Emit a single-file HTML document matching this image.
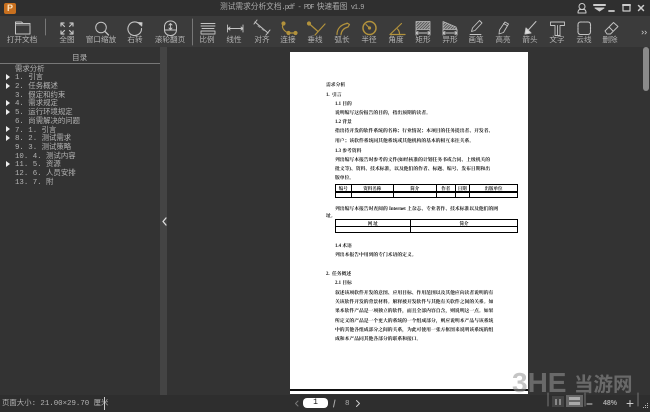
<!DOCTYPE html>
<html lang="zh"><head><meta charset="utf-8"><style>
html,body{margin:0;padding:0}
body{width:650px;height:412px;overflow:hidden;position:relative;background:#333;font-family:"Liberation Sans","Noto Sans CJK SC",sans-serif}
div{position:absolute;white-space:nowrap}
#title{left:0;top:0;width:650px;height:16px;background:#2f2f2f}
#tb{left:0;top:16px;width:650px;height:31px;background:#3b3b3b}
.l{top:35px;font-size:7.6px;line-height:10px;color:#b4b4b4;transform:translateX(-50%)}
.side{font-size:7.4px;line-height:9px;color:#b4b4b4;font-family:"Liberation Mono","Noto Sans CJK SC",monospace}
.arr{left:6px;width:0;height:0;border-left:4px solid #eee;border-top:3px solid transparent;border-bottom:3px solid transparent}
#page{left:290px;top:52px;width:238px;height:337px;background:#fff}
.d{font-family:"Liberation Serif","Noto Serif CJK SC",serif;font-size:4.8px;line-height:6px;color:#111;font-weight:700}
.c{border:.7px solid #000;box-sizing:border-box;font-family:"Liberation Serif","Noto Serif CJK SC",serif;font-size:4.5px;line-height:7px;text-align:center;color:#111;font-weight:700}
svg{position:absolute;left:0;top:0}
.n{letter-spacing:-1px;font-size:7px}
</style></head><body>
<div id="title"></div>
<div id="tb"></div>
<div style="left:4px;top:3px;width:12px;height:11px;background:#c8701f;border-radius:2px;color:#fbe3c0;font-size:9px;line-height:11px;text-align:center;font-weight:700">P</div>
<div style="left:220px;top:3px;font-size:7.7px;line-height:10px;color:#aaa;font-family:'Liberation Mono','Noto Sans CJK SC',monospace">测试需求分析文档<span class="n">.pdf - PDF </span>快速看图<span class="n"> v1.9</span></div>

<div class="l" style="left:22px">打开文档</div>
<div class="l" style="left:67px">全图</div>
<div class="l" style="left:101px">窗口缩放</div>
<div class="l" style="left:135px">右转</div>
<div class="l" style="left:170px">滚轮翻页</div>
<div class="l" style="left:207px">比例</div>
<div class="l" style="left:234px">线性</div>
<div class="l" style="left:262px">对齐</div>
<div class="l" style="left:288px">连接</div>
<div class="l" style="left:315px">垂线</div>
<div class="l" style="left:342px">弧长</div>
<div class="l" style="left:369px">半径</div>
<div class="l" style="left:396px">角度</div>
<div class="l" style="left:423px">矩形</div>
<div class="l" style="left:450px">异形</div>
<div class="l" style="left:476px">画笔</div>
<div class="l" style="left:503px">高亮</div>
<div class="l" style="left:530px">箭头</div>
<div class="l" style="left:557px">文字</div>
<div class="l" style="left:584px">云线</div>
<div class="l" style="left:610px">删除</div>

<!-- sidebar -->
<div style="left:160px;top:47px;width:7px;height:348px;background:#444"></div>
<div style="left:72px;top:53px;font-size:7.6px;line-height:10px;color:#b4b4b4">目录</div>
<div style="left:0;top:63px;width:160px;height:1px;background:#777"></div>
<div class="side" style="left:15px;top:65.5px">需求分析</div>
<div class="side" style="left:15px;top:74px">1.  引言</div>
<div class="side" style="left:15px;top:82.5px">2.  任务概述</div>
<div class="side" style="left:15px;top:91.5px">3.  假定和约束</div>
<div class="side" style="left:15px;top:100px">4.  需求规定</div>
<div class="side" style="left:15px;top:108.5px">5.  运行环境规定</div>
<div class="side" style="left:15px;top:117.5px">6.  尚需解决的问题</div>
<div class="side" style="left:15px;top:126.5px">7.  1.  引言</div>
<div class="side" style="left:15px;top:135px">8.  2.  测试需求</div>
<div class="side" style="left:15px;top:143.5px">9.  3.  测试策略</div>
<div class="side" style="left:15px;top:152.5px">10.  4.  测试内容</div>
<div class="side" style="left:15px;top:161px">11.  5.  资源</div>
<div class="side" style="left:15px;top:169.5px">12.  6.  人员安排</div>
<div class="side" style="left:15px;top:179px">13.  7.  附</div>
<div class="arr" style="top:74px"></div>
<div class="arr" style="top:82.5px"></div>
<div class="arr" style="top:100px"></div>
<div class="arr" style="top:108.5px"></div>
<div class="arr" style="top:126px"></div>
<div class="arr" style="top:135px"></div>
<div class="arr" style="top:161px"></div>

<!-- page -->
<div id="page"></div>
<div style="left:290px;top:389px;width:238px;height:2px;background:#111"></div>
<div style="left:290px;top:391px;width:238px;height:3px;background:#fff"></div>
<div class="d" style="left:326px;top:83px">需求分析</div>
<div class="d" style="left:326px;top:93px">1.&nbsp; 引言</div>
<div class="d" style="left:335px;top:102px">1.1 目的</div>
<div class="d" style="left:335px;top:111px">说明编写这份报告的目的，指出预期的读者。</div>
<div class="d" style="left:335px;top:120px">1.2 背景</div>
<div class="d" style="left:335px;top:129px">指出待开发的软件系统的名称；行业情况；本项目的任务提出者、开发者、</div>
<div class="d" style="left:335px;top:139px">用户；该软件系统同其他系统或其他机构的基本的相互来往关系。</div>
<div class="d" style="left:335px;top:149px">1.3 参考资料</div>
<div class="d" style="left:335px;top:158px">列出编写本报告时参考的文件(如经核准的计划任务书或合同、上级机关的</div>
<div class="d" style="left:335px;top:167px">批文等)、资料、技术标准，以及他们的作者、标题、编号、发布日期和出</div>
<div class="d" style="left:335px;top:176px">版单位。</div>
<div class="c" style="left:335px;top:184px;width:16.5px;height:8px">编号</div>
<div class="c" style="left:351px;top:184px;width:42.5px;height:8px">资料名称</div>
<div class="c" style="left:393px;top:184px;width:43.5px;height:8px">简介</div>
<div class="c" style="left:436px;top:184px;width:19.5px;height:8px">作者</div>
<div class="c" style="left:455px;top:184px;width:14.5px;height:8px">日期</div>
<div class="c" style="left:469px;top:184px;width:49px;height:8px">出版单位</div>
<div class="c" style="left:335px;top:191.5px;width:16.5px;height:6px"></div>
<div class="c" style="left:351px;top:191.5px;width:42.5px;height:6px"></div>
<div class="c" style="left:393px;top:191.5px;width:43.5px;height:6px"></div>
<div class="c" style="left:436px;top:191.5px;width:19.5px;height:6px"></div>
<div class="c" style="left:455px;top:191.5px;width:14.5px;height:6px"></div>
<div class="c" style="left:469px;top:191.5px;width:49px;height:6px"></div>
<div class="d" style="left:335px;top:207px">列出编写本报告时查阅的 Internet 上杂志、专业著作、技术标准以及他们的网</div>
<div class="d" style="left:326px;top:214px">址。</div>
<div class="c" style="left:335px;top:219px;width:75.5px;height:7.5px">网 址</div>
<div class="c" style="left:410px;top:219px;width:108px;height:7.5px">简介</div>
<div class="c" style="left:335px;top:226px;width:75.5px;height:7px"></div>
<div class="c" style="left:410px;top:226px;width:108px;height:7px"></div>
<div class="d" style="left:335px;top:244px">1.4 术语</div>
<div class="d" style="left:335px;top:253px">列出本报告中用到的专门术语的定义。</div>
<div class="d" style="left:326px;top:272px">2.&nbsp; 任务概述</div>
<div class="d" style="left:335px;top:281px">2.1 目标</div>
<div class="d" style="left:335px;top:291px">叙述该项软件开发的意图、应用目标、作用范围以及其他应向读者说明的有</div>
<div class="d" style="left:335px;top:300px">关该软件开发的背景材料。解释被开发软件与其他有关软件之间的关系。如</div>
<div class="d" style="left:335px;top:309px">果本软件产品是一项独立的软件，而且全部内容自含，则说明这一点。如果</div>
<div class="d" style="left:335px;top:319px">所定义的产品是一个更大的系统的一个组成部分，则应说明本产品与该系统</div>
<div class="d" style="left:335px;top:328px">中的其他各组成部分之间的关系，为此可使用一张方框图来说明该系统的组</div>
<div class="d" style="left:335px;top:337px">成和本产品同其他各部分的联系和接口。</div>

<!-- scrollbar -->
<div style="left:643px;top:47px;width:6px;height:44px;background:#8a8a8a;border-radius:3px"></div>

<!-- status bar -->
<div style="left:0;top:395px;width:650px;height:17px;background:#2e2e2e"></div>
<div style="left:2px;top:399px;font-size:7.4px;line-height:10px;color:#b4b4b4;font-family:'Liberation Mono','Noto Sans CJK SC',monospace">页面大小: 21.00×29.70 厘米</div>
<div style="left:104px;top:397px;width:1px;height:13px;background:#ccc"></div>
<div style="left:303px;top:398px;width:25px;height:10px;background:#fff;border-radius:4px;color:#111;font-size:8px;line-height:10px;text-align:center;font-family:'Liberation Mono',monospace">1</div>
<div style="left:345px;top:399px;font-size:7.5px;line-height:10px;color:#aaa;font-family:'Liberation Mono',monospace">8</div>
<div style="left:552px;top:396px;width:12px;height:11px;background:#444"></div>
<div style="left:555px;top:399px;width:1.5px;height:6px;background:#888"></div>
<div style="left:559px;top:399px;width:1.5px;height:6px;background:#888"></div>
<div style="left:566px;top:395px;width:17px;height:12px;background:#666"></div>
<div style="left:569px;top:397px;width:11px;height:3px;background:#aaa"></div>
<div style="left:569px;top:402px;width:11px;height:3px;background:#aaa"></div>
<div style="left:603px;top:399px;font-size:7px;line-height:10px;color:#aaa;font-weight:700">48%</div>

<!-- watermark -->
<div style="left:512px;top:366px;font-size:28px;line-height:34px;font-weight:700;color:rgba(150,150,150,.55)">3HE</div>
<div style="left:574px;top:370px;font-size:19.5px;line-height:26px;font-weight:700;color:rgba(150,150,150,.55);font-family:'Noto Sans CJK SC',sans-serif">当游网</div>

<svg width="650" height="412" viewBox="0 0 650 412" fill="none" stroke-linecap="round" stroke-linejoin="round">
<defs><pattern id="h" width="2" height="2" patternUnits="userSpaceOnUse" patternTransform="rotate(45)"><rect width="2" height="2" fill="#555"/><rect width="1" height="2" fill="#aaa"/></pattern></defs>
<!-- title icons -->
<g stroke="#ccc" stroke-width="1">
<circle cx="582" cy="6.5" r="3"/><path d="M578 13c0-2.500 1-3.500 2-3.500h4c1 0 2 1 2 3.500z"/>
<path d="M594 5h11" stroke-width="2"/><path d="M595 8h9l-4.500 3z" fill="#ccc"/>
<path d="M609 11h5" stroke-width="1.800"/>
<rect x="623" y="5" width="7" height="6" stroke-width="1.200"/><path d="M623 5h7" stroke-width="2"/>
<path d="M638.500 5.500l5 5M643.500 5.500l-5 5" stroke-width="1.500"/>
</g>
<!-- separators -->
<path d="M45.500 19v16M192.500 19v26" stroke="#777"/>
<g stroke="#c4c4c4" stroke-width="1">
<!-- folder -->
<path d="M15.500 23.500v10.500h14.500v-10.500zM15.500 23.500v-1.500h6l1.500 1.500"/><path d="M16 25h14" stroke="#999"/>
<!-- full -->
<path d="M61 23l3.500 3.500M61 23v3M61 23h3M73 23l-3.500 3.500M73 23v3M73 23h-3M61 34l3.500-3.500M61 34v-3M61 34h3M73 34l-3.500-3.500M73 34v-3M73 34h-3" stroke-width="1.200"/>
<!-- zoom -->
<circle cx="101" cy="27.500" r="5.300"/><path d="M105 31.500l3.500 3.500" stroke-width="1.300"/>
<!-- rotate -->
<path d="M140 24.500a6.800 6.800 0 1 0 1.500 4" stroke-width="1.100"/><path d="M138.500 22.500l3.500.2-.3 3.300z" fill="#ddd"/>
<!-- mouse -->
<rect x="164.500" y="21" width="12" height="14.500" rx="5.500"/><path d="M170.500 23.500v6M169 25l1.500-1.500 1.500 1.500M169 28l1.500 1.500 1.500-1.500M165 30h11" stroke-width=".9"/>
<!-- scale -->
<path d="M201 23.500h14M201 26h14M202 28.500h12M201 31h14v3h-14z" stroke-width=".9"/>
<!-- linear -->
<path d="M227.500 25v7M243 25v7M228 28.500h15M230 27l-2 1.500 2 1.500M241 27l2 1.500-2 1.500" stroke-width=".9"/>
<!-- align -->
<path d="M255 22l13 11M254 24l3-4M266 35l4-5" stroke-width="1"/><path d="M258 26l2 1.500M262 29l2 1.500" stroke="#999"/>
<!-- arrows under rects -->
<path d="M416 30v5M430 30v5M416 33h14M418 31.500l-2 1.500 2 1.500M428 31.500l2 1.500-2 1.500M443 30v5M457 30v5M443 33h14M445 31.500l-2 1.500 2 1.500M455 31.500l2 1.500-2 1.500" stroke-width=".9"/>
<!-- hatch -->
<rect x="416" y="21.500" width="14" height="8" fill="url(#h)" stroke="#bbb" stroke-width=".8"/>
<path d="M443 21.500v8h14l-1-2.500z" fill="url(#h)" stroke="#bbb" stroke-width=".8"/>
<!-- pencil -->
<path d="M471.500 31.500l1 -3.500 7-7.500 2.500 2.500-7 7.500zM470 34.500h11" stroke-width=".9"/>
<!-- marker -->
<path d="M499 34l.5-4 5.500-8 3.500 2-5 8.500zM503.500 23.500l3.500 2" stroke-width=".9"/>
<!-- arrow -->
<path d="M536 21.500l-9 10" stroke-width="1"/><path d="M525 34l1-6 5 5z" fill="#ddd"/>
<!-- T -->
<path d="M550.500 22h14v3.500h-4.500v10h-5v-10h-4.500zM557.500 25.500v10" stroke-width=".9"/>
<!-- cloud -->
<rect x="578" y="22" width="12.500" height="12.500" rx="2.500" stroke-dasharray="2 .8" stroke-width="1.100"/>
<!-- eraser -->
<path d="M605 31l8.500-8.500 4.500 4-7.500 7.500h-3.500zM609 27l4 4" stroke-width=".9"/>
<path d="M642 31l1.500 1.500-1.500 1.500M645 31l1.500 1.500-1.500 1.500" stroke-width=".8"/>
</g>
<!-- gold icons -->
<g stroke="#b2923c" stroke-width="1.200">
<circle cx="283.500" cy="23.500" r="1.500" fill="#b2923c"/><circle cx="288.500" cy="33" r="1.500" fill="#b2923c"/><circle cx="295.500" cy="33" r="1.500" fill="#b2923c"/>
<path d="M283.500 24c-2.500 3 0 7 5 9h7"/>
<path d="M309 23.500l9 8M325 24l-10 11"/><circle cx="309" cy="23.500" r="1.500" fill="#b2923c"/>
<path d="M337 34.500c0-6 4-10 10-11M341 34.500c.5-4 3-6.500 7-7.500M347 23l2.500 1.500-1.500 2.500"/>
<circle cx="369.500" cy="28" r="6.500" stroke-width="1.500"/><path d="M369.500 28l-3.500-3.500"/><circle cx="369.500" cy="28" r="1" fill="#b2923c"/>
<path d="M390 34.500h15M390 34.500l11.500-11M397.500 29c1.500 1.500 2 3 2 5"/>
</g>
<!-- chevrons -->
<path d="M166 218l-3 3.500 3 3.500" stroke="#ddd" stroke-width="1.300"/>
<g stroke="#999" stroke-width="1">
<path d="M298 401l-2.500 2.500 2.500 2.500" stroke="#777"/><path d="M356.500 400.500l3 3-3 3" stroke="#ccc"/>
<path d="M335 400l-1.500 7" stroke="#aaa"/>
<path d="M548 393v13M585 393v13M638 393v13" stroke="#777"/>
<path d="M587 404h5M627 403.500h6M630 400.500v6" stroke="#ccc"/>
</g>
<path d="M643 407h1v1h-1zM645 405h1v1h-1zM645 407h1v1h-1zM647 403h1v1h-1zM647 405h1v1h-1zM647 407h1v1h-1z" fill="#bbb"/>
</svg>
</body></html>
